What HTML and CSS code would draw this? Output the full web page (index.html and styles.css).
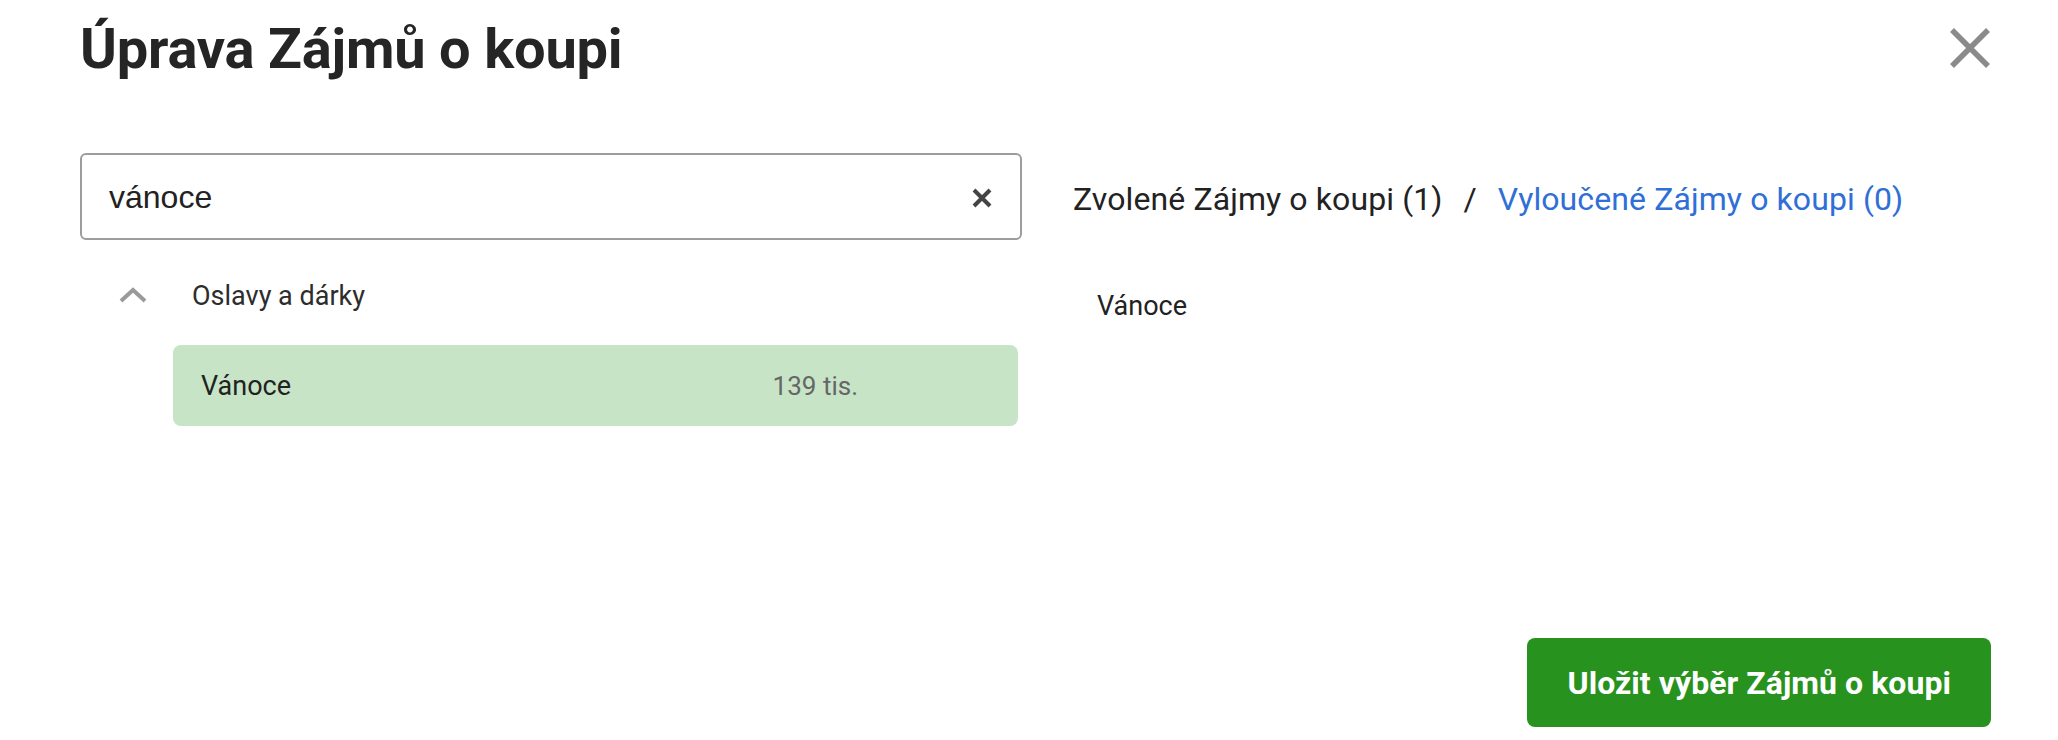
FILE: index.html
```html
<!DOCTYPE html>
<html lang="cs">
<head>
<meta charset="utf-8">
<title>Úprava Zájmů o koupi</title>
<link rel="stylesheet" href="styles.css">
</head>
<body>
<div class="dialog">
  <header class="dialog-header">
    <h1 class="dialog-title">Úprava Zájmů o koupi</h1>
    <button class="close-btn" aria-label="Zavřít">
      <svg width="42" height="42" viewBox="0 0 42 42"><path d="M3 3 L39 39 M39 3 L3 39" stroke="#8a8a8a" stroke-width="5.5" fill="none"/></svg>
    </button>
  </header>

  <div class="columns">
    <section class="left-col">
      <div class="search">
        <span class="search-text">vánoce</span>
        <svg class="search-clear" width="20" height="20" viewBox="0 0 20 20"><path d="M2 2 L18 18 M18 2 L2 18" stroke="#444" stroke-width="4" fill="none"/></svg>
      </div>
      <div class="tree">
        <div class="category">
          <svg class="chevron" width="28" height="16" viewBox="0 0 28 16"><path d="M2 14 L14 3 L26 14" stroke="#9a9a9a" stroke-width="4" fill="none"/></svg>
          <span class="category-name">Oslavy a dárky</span>
        </div>
        <div class="item selected">
          <span class="item-name">Vánoce</span>
          <span class="item-count">139 tis.</span>
        </div>
      </div>
    </section>

    <section class="right-col">
      <div class="tabs">
        <span class="tab-active">Zvolené Zájmy o koupi (1)</span>
        <span class="tab-sep">/</span>
        <a class="tab-link" href="#">Vyloučené Zájmy o koupi (0)</a>
      </div>
      <ul class="chosen">
        <li>Vánoce</li>
      </ul>
    </section>
  </div>

  <footer class="dialog-footer">
    <button class="save-btn">Uložit výběr Zájmů o koupi</button>
  </footer>
</div>
</body>
</html>
```

FILE: styles.css
```css
* { box-sizing: border-box; }

html, body {
  margin: 0;
  padding: 0;
  background: #fff;
}

body {
  font-family: Roboto, "Liberation Sans", Arial, sans-serif;
  color: #222;
}

.dialog {
  height: 740px;
  padding: 15px 67px 13px 80px;
  display: flex;
  flex-direction: column;
}

.dialog-header {
  display: flex;
  justify-content: space-between;
  align-items: center;
  height: 68px;
}

.dialog-title {
  margin: 0;
  font-size: 56px;
  line-height: 68px;
  font-weight: 700;
  color: #252525;
  letter-spacing: -0.2px;
}

.close-btn {
  border: 0;
  background: none;
  padding: 0;
  width: 42px;
  height: 42px;
  margin-top: -3px;
  display: flex;
}

.columns {
  margin-top: 70px;
  display: grid;
  grid-template-columns: 942px 1fr;
  column-gap: 51px;
}

.search {
  height: 87px;
  border: 2px solid #9d9d9d;
  border-radius: 6px;
  display: flex;
  align-items: center;
  justify-content: space-between;
  padding: 0 28px 0 27px;
}

.search-text {
  font-family: "Liberation Sans", Arial, sans-serif;
  font-size: 32px;
  color: #222;
  margin-top: 2px;
}

.search-clear { margin-top: 3px; }

.tree {
  padding-top: 24px;
}

.category {
  height: 64px;
  display: flex;
  align-items: center;
  padding-left: 39px;
}

.chevron {
  margin-right: 45px;
  margin-top: -2px;
}

.category-name {
  font-size: 27px;
  color: #2d2d2d;
}

.item {
  margin: 17px 4px 0 93px;
  height: 81px;
  border-radius: 8px;
  display: flex;
  align-items: center;
  padding-left: 28px;
  font-size: 27px;
}

.item.selected { background: #c7e4c6; }

.item-name {
  flex: 1;
  color: #222;
}

.item-count {
  color: #666;
  font-size: 26px;
  margin-right: 160px;
}

.tabs {
  height: 87px;
  display: flex;
  align-items: center;
  padding-top: 5px;
  font-size: 32px;
  letter-spacing: 0.1px;
}

.tab-active { color: #222; }

.tab-sep {
  margin: 0 21px;
  color: #222;
}

.tab-link {
  color: #2f6fd6;
  text-decoration: none;
}

.chosen {
  list-style: none;
  margin: 50px 0 0;
  padding: 0 0 0 24px;
  font-size: 27px;
  color: #222;
}

.dialog-footer {
  margin-top: auto;
  display: flex;
  justify-content: flex-end;
}

.save-btn {
  height: 89px;
  padding: 0 40px;
  border: 0;
  border-radius: 8px;
  background: #28921f;
  color: #fff;
  font-family: Roboto, "Liberation Sans", Arial, sans-serif;
  font-weight: 700;
  font-size: 32px;
  letter-spacing: 0.05px;
}
```
